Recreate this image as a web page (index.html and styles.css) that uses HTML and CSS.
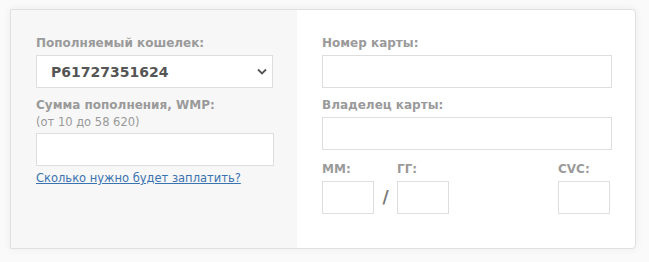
FILE: index.html
```html
<!DOCTYPE html>
<html lang="ru">
<head>
  <meta charset="UTF-8" />
  <meta name="viewport" content="width=device-width, initial-scale=1.0"/>
  <title>Пополнение кошелька</title>
  <link rel="stylesheet" href="styles.css">
</head>
<body>
  <form class="card">
    <section class="side side-wallet">
      <label class="label" for="wallet">Пополняемый кошелек:</label>
      <div class="select-wrap">
        <select id="wallet" class="select">
          <option>P61727351624</option>
        </select>
        <svg class="chevron" width="10" height="7" viewBox="0 0 10 7"><path d="M1 1.5 L5 5.5 L9 1.5" fill="none" stroke="#555" stroke-width="1.8"/></svg>
      </div>

      <label class="label label-gap" for="amount">Сумма пополнения, WMP:</label>
      <div class="hint">(от 10 до 58 620)</div>
      <input id="amount" class="field field-amount" type="text">
      <a class="link" href="#">Сколько нужно будет заплатить?</a>
    </section>

    <section class="side side-card">
      <label class="label" for="number">Номер карты:</label>
      <input id="number" class="field field-wide" type="text">

      <label class="label label-gap" for="owner">Владелец карты:</label>
      <input id="owner" class="field field-wide" type="text">

      <div class="row">
        <div class="col">
          <label class="label" for="mm">ММ:</label>
          <input id="mm" class="field field-small" type="text">
        </div>
        <span class="slash">/</span>
        <div class="col">
          <label class="label" for="yy">ГГ:</label>
          <input id="yy" class="field field-small" type="text">
        </div>
        <div class="col col-cvc">
          <label class="label" for="cvc">CVC:</label>
          <input id="cvc" class="field field-small" type="text">
        </div>
      </div>
    </section>
  </form>
</body>
</html>
```

FILE: styles.css
```css
body {
  margin: 0;
  padding: 9px 13px 12px 10px;
  background: #fafafa;
  font-family: "DejaVu Sans", Verdana, sans-serif;
  font-size: 13px;
  color: #999;
}

.card {
  display: grid;
  grid-template-columns: 286px 1fr;
  height: 238px;
  border: 1px solid #e0e0e0;
  border-radius: 0 4px 4px 0;
  background: #fff;
  box-shadow: 0 0 8px rgba(0, 0, 0, 0.06);
}

.side {
  padding: 25px 24px 0 25px;
}

.side-wallet {
  background: #f7f7f7;
}

.label {
  display: block;
  line-height: 16px;
  font-weight: bold;
  font-size: 12px;
  color: #9a9a9a;
  margin-bottom: 4px;
}

.label-gap {
  margin-top: 9px;
}

.hint {
  line-height: 16px;
  font-size: 11.5px;
  margin-top: -3px;
  margin-bottom: 3px;
  color: #999;
}

.select-wrap {
  position: relative;
  width: 237px;
}

.select {
  display: block;
  width: 100%;
  height: 33px;
  padding: 0 0 0 14px;
  border: 1px solid #dedede;
  border-radius: 0;
  background: #fff;
  appearance: none;
  font-family: inherit;
  font-size: 14px;
  font-weight: bold;
  color: #555;
}

.chevron {
  position: absolute;
  right: 6px;
  top: 13px;
}

.field {
  display: block;
  box-sizing: border-box;
  height: 33px;
  border: 1px solid #dedede;
  background: #fff;
  padding: 0 6px;
  font-family: inherit;
}

.field-amount {
  width: 238px;
}

.field-wide {
  width: 290px;
}

.field-small {
  width: 52px;
}

.link {
  display: inline-block;
  margin-top: 4px;
  line-height: 16px;
  font-size: 11.5px;
  color: #3b73b0;
}

.row {
  display: flex;
  align-items: flex-end;
  margin-top: 11px;
}

.slash {
  width: 23px;
  text-align: center;
  font-size: 17px;
  font-weight: bold;
  color: #777;
  line-height: 33px;
}

.col-cvc {
  margin-left: auto;
  margin-right: 2px;
}
```
